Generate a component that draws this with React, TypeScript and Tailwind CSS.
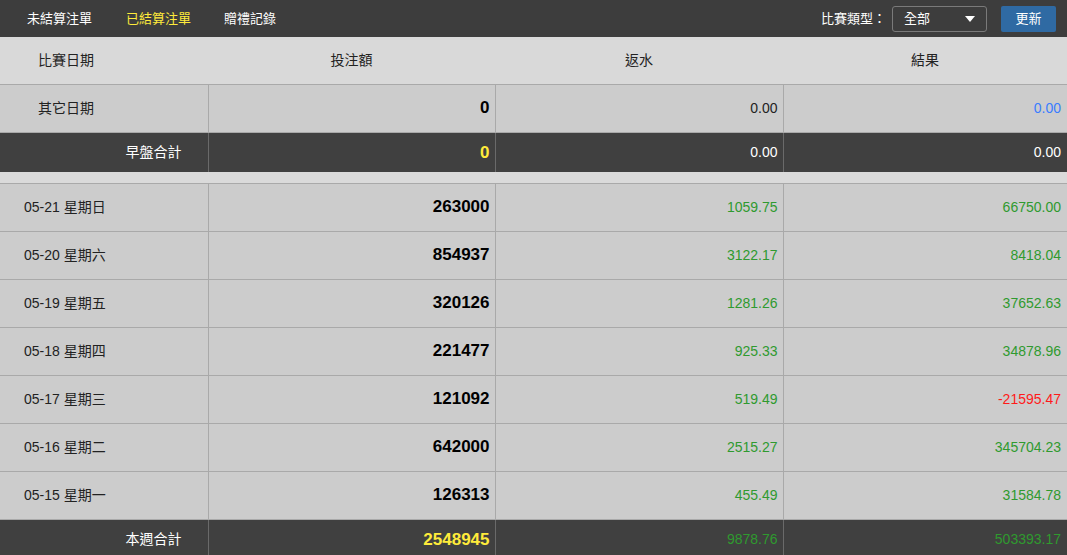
const font = { fontFamily: '"Liberation Sans", "Noto Sans CJK TC", Arial, sans-serif' };

type Row = { date: string; bet: string; rebate: string; result: string; neg?: boolean };

const rows: Row[] = [
  { date: "05-21 星期日", bet: "263000", rebate: "1059.75", result: "66750.00" },
  { date: "05-20 星期六", bet: "854937", rebate: "3122.17", result: "8418.04" },
  { date: "05-19 星期五", bet: "320126", rebate: "1281.26", result: "37652.63" },
  { date: "05-18 星期四", bet: "221477", rebate: "925.33", result: "34878.96" },
  { date: "05-17 星期三", bet: "121092", rebate: "519.49", result: "-21595.47", neg: true },
  { date: "05-16 星期二", bet: "642000", rebate: "2515.27", result: "345704.23" },
  { date: "05-15 星期一", bet: "126313", rebate: "455.49", result: "31584.78" },
];

function TopBar() {
  return (
    <div className="h-[37px] bg-[#3d3d3d] flex items-center text-[13px] text-white">
      <div className="flex items-center">
        <span className="ml-[27px]">未結算注單</span>
        <span className="ml-[34px] text-[#ffeb3b]">已結算注單</span>
        <span className="ml-[33px]">贈禮記錄</span>
      </div>
      <div className="ml-auto flex items-center">
        <span>比賽類型：</span>
        <div className="ml-[6px] w-[95px] h-[26px] border border-[#7a7a7a] rounded-[3px] flex items-center px-[11px]">
          <span>全部</span>
          <svg className="ml-auto" width="10" height="6" viewBox="0 0 10 6">
            <path d="M0 0 L10 0 L5 6 Z" fill="#fff" />
          </svg>
        </div>
        <button className="ml-[14px] mr-[11px] w-[55px] h-[26px] bg-[#2f6aa3] rounded-[2px] text-white text-[13px]">
          更新
        </button>
      </div>
    </div>
  );
}

export default function App() {
  const cell = "border-r border-b border-[#a9a9a9] text-right pr-[5px]";
  const big = " text-[17px] font-bold";
  return (
    <div className="w-[1067px] h-[555px] overflow-hidden bg-[#d9d9d9]" style={font}>
      <TopBar />
      <table className="w-[1067px] border-collapse table-fixed text-[14px] text-[#222]">
        <colgroup>
          <col className="w-[208px]" />
          <col className="w-[287px]" />
          <col className="w-[288px]" />
          <col className="w-[284px]" />
        </colgroup>
        <thead>
          <tr className="h-[47px] bg-[#d9d9d9]">
            <th className="font-normal text-left pl-[38px] border-b border-[#a9a9a9]">比賽日期</th>
            <th className="font-normal border-b border-[#a9a9a9]">投注額</th>
            <th className="font-normal border-b border-[#a9a9a9]">返水</th>
            <th className="font-normal border-b border-[#a9a9a9]">結果</th>
          </tr>
        </thead>
        <tbody>
          <tr className="h-[48px] bg-[#cccccc]">
            <td className="border-r border-b border-[#a9a9a9] pl-[38px]">其它日期</td>
            <td className={cell + big + " text-black"}>0</td>
            <td className={cell}>0.00</td>
            <td className={cell + " border-r-0 pr-[6px] text-[#3a7dff]"}>0.00</td>
          </tr>
          <tr className="h-[40px] bg-[#404040] text-white">
            <td className="border-r border-[#6a6a6a] text-right pr-[26px]">早盤合計</td>
            <td className={"border-r border-[#6a6a6a] text-right pr-[5px] text-[#ffeb3b]" + big}>0</td>
            <td className="border-r border-[#6a6a6a] text-right pr-[5px]">0.00</td>
            <td className="text-right pr-[6px]">0.00</td>
          </tr>
          <tr className="h-[11px] bg-[#dadada]">
            <td colSpan={4} className="border-b border-[#a9a9a9]"></td>
          </tr>
          {rows.map((r) => (
            <tr key={r.date} className="h-[48px] bg-[#cccccc]">
              <td className="border-r border-b border-[#a9a9a9] pl-[24px]">{r.date}</td>
              <td className={cell + big + " text-black"}>{r.bet}</td>
              <td className={cell + " text-[#2f9a2f]"}>{r.rebate}</td>
              <td className={cell + " border-r-0 pr-[6px] " + (r.neg ? "text-[#ff1a1a]" : "text-[#2f9a2f]")}>{r.result}</td>
            </tr>
          ))}
          <tr className="h-[40px] bg-[#404040] text-white">
            <td className="border-r border-[#6a6a6a] text-right pr-[26px]">本週合計</td>
            <td className={"border-r border-[#6a6a6a] text-right pr-[5px] text-[#ffeb3b]" + big}>2548945</td>
            <td className="border-r border-[#6a6a6a] text-right pr-[5px] text-[#2f9a2f]">9878.76</td>
            <td className="text-right pr-[6px] text-[#2f9a2f]">503393.17</td>
          </tr>
        </tbody>
      </table>
    </div>
  );
}
